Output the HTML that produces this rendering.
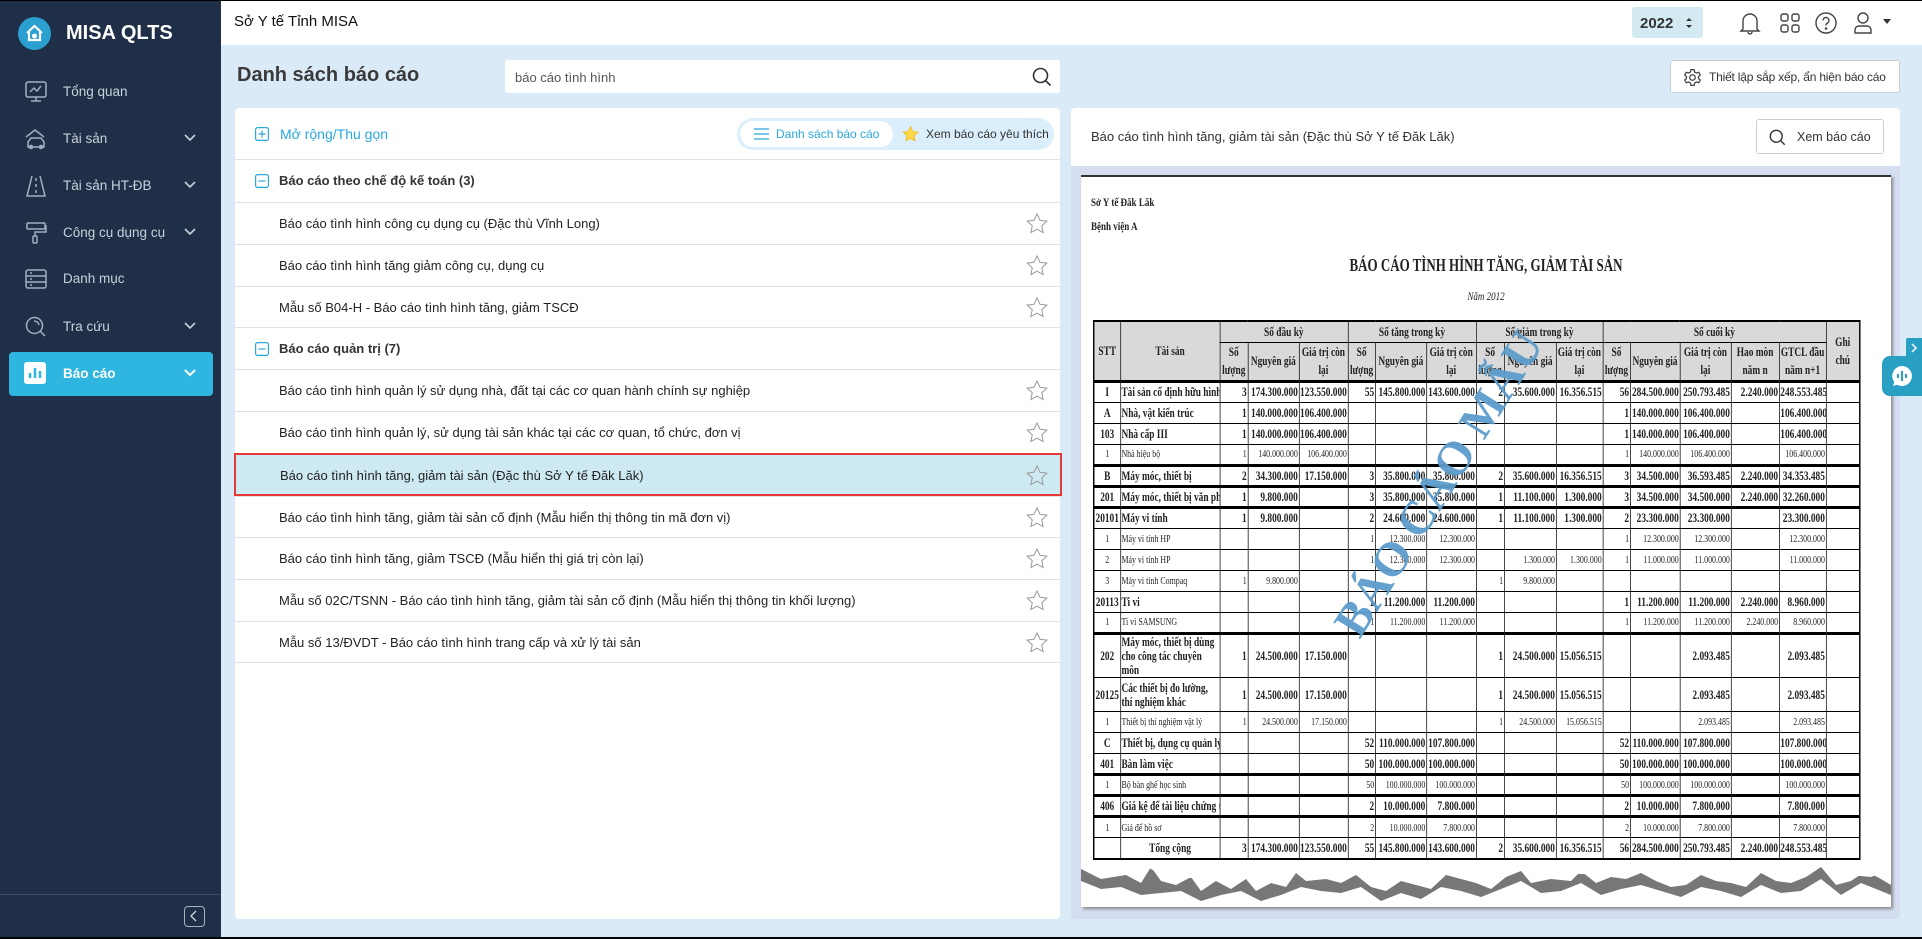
<!DOCTYPE html>
<html><head><meta charset="utf-8">
<style>
*{box-sizing:border-box;margin:0;padding:0}
body{width:1922px;height:939px;overflow:hidden;font-family:"Liberation Sans",sans-serif;background:#dbeaf7;position:relative;color:#222}
.sb{position:absolute;left:0;top:0;width:221px;height:939px;background:#1e2f47}
.logo{position:absolute;left:18px;top:17px;width:33px;height:33px;border-radius:50%;background:#2a9fd0}
.brand{position:absolute;left:66px;top:22px;color:#fff;font-weight:bold;font-size:20px}
.mi{position:absolute;left:0;width:221px;height:44px;color:#c9d1db;font-size:13.5px}
.mi span{position:absolute;left:63px;top:14px}
.mi svg.ic{position:absolute;left:24px;top:10px}
.mi svg.ch{position:absolute;left:184px;top:17px}
.act{left:9px;width:204px;background:#2eb6e0;border-radius:4px;color:#fff;font-weight:bold}
.hdr{position:absolute;left:221px;top:0;width:1701px;height:45px;background:#fff}
.panel{position:absolute;background:#fff;border-radius:4px}
.row{position:absolute;left:0;width:825px;height:42px;border-top:1px solid #e2e2e2;font-size:13px}
.row span{position:absolute;left:44px;top:13px}
.star{position:absolute;right:12px;top:10px}
table{border-collapse:collapse;font-family:"Liberation Serif",serif;table-layout:fixed}
td{border:1px solid #000;height:21px;font-size:11px;text-align:right;padding:0 1px;white-space:nowrap;overflow:hidden}
tr.b td{font-weight:bold;font-size:13px}
tr.t td{border-top:3px solid #000}
td.c{text-align:center}td.l{text-align:left}
tr.h td{text-align:center;font-weight:bold;font-size:13px;background:#d9d9d9;line-height:1.35;white-space:normal}
tr.tall td{height:34px}
tr.tall td.l{white-space:normal;line-height:1.1}
</style></head><body>
<div style="position:absolute;left:0;top:0;width:1922px;height:1px;background:#000;z-index:9"></div>
<div style="position:absolute;left:0;top:937px;width:1922px;height:2px;background:#000;z-index:9"></div>
<div class="sb">
 <div class="logo"><svg width="33" height="33" viewBox="0 0 33 33"><path d="M9 16 L16.5 9 L24 16 M11 15 V23 H22 V15" fill="none" stroke="#fff" stroke-width="2.2"/><circle cx="16.5" cy="19" r="2.5" fill="#fff"/></svg></div>
 <div class="brand">MISA QLTS</div>
 <div class="mi" style="top:70px"><svg class="ic" width="24" height="24" viewBox="0 0 24 24" fill="none" stroke="#9fb0c2" stroke-width="1.5"><rect x="2" y="2" width="20" height="15" rx="2"/><path d="M6 12l4-4 3 3 4-5M12 17v4M7 21h10"/></svg><span>Tổng quan</span></div>
 <div class="mi" style="top:117px"><svg class="ic" width="24" height="24" viewBox="0 0 24 24" fill="none" stroke="#9fb0c2" stroke-width="1.5"><path d="M2 10L11 3l9 7M4 15l3-4h10l3 4v5H4z"/><circle cx="7" cy="20" r="1.5"/><circle cx="17" cy="20" r="1.5"/></svg><span>Tài sản</span><svg class="ch" width="12" height="8" viewBox="0 0 12 8"><path d="M1 1l5 5 5-5" fill="none" stroke="#c9d1db" stroke-width="1.6"/></svg></div>
 <div class="mi" style="top:164px"><svg class="ic" width="24" height="24" viewBox="0 0 24 24" fill="none" stroke="#9fb0c2" stroke-width="1.5"><path d="M8 2L3 22h18L16 2M12 4v3M12 10v3M12 16v3"/></svg><span>Tài sản HT-ĐB</span><svg class="ch" width="12" height="8" viewBox="0 0 12 8"><path d="M1 1l5 5 5-5" fill="none" stroke="#c9d1db" stroke-width="1.6"/></svg></div>
 <div class="mi" style="top:211px"><svg class="ic" width="24" height="24" viewBox="0 0 24 24" fill="none" stroke="#9fb0c2" stroke-width="1.5"><rect x="3" y="2" width="18" height="6" rx="1"/><path d="M21 5h1v6H11v4"/><rect x="9" y="15" width="4" height="7" rx="1"/></svg><span>Công cụ dụng cụ</span><svg class="ch" width="12" height="8" viewBox="0 0 12 8"><path d="M1 1l5 5 5-5" fill="none" stroke="#c9d1db" stroke-width="1.6"/></svg></div>
 <div class="mi" style="top:257px"><svg class="ic" width="24" height="24" viewBox="0 0 24 24" fill="none" stroke="#9fb0c2" stroke-width="1.5"><rect x="2" y="3" width="20" height="18" rx="2"/><path d="M2 9h20M2 15h20M6 6h2M6 12h2M6 18h2"/></svg><span>Danh mục</span></div>
 <div class="mi" style="top:305px"><svg class="ic" width="24" height="24" viewBox="0 0 24 24" fill="none" stroke="#9fb0c2" stroke-width="1.5"><circle cx="10.5" cy="10.5" r="8"/><path d="M16 16l5 5M10 6a5 5 0 0 1 5 4"/></svg><span>Tra cứu</span><svg class="ch" width="12" height="8" viewBox="0 0 12 8"><path d="M1 1l5 5 5-5" fill="none" stroke="#c9d1db" stroke-width="1.6"/></svg></div>
 <div class="mi act" style="top:352px"><svg class="ic" style="left:15px" width="22" height="22" viewBox="0 0 22 22"><rect x="0" y="0" width="22" height="22" rx="3" fill="#fff"/><path d="M6 16V11M11 16V6M16 16V9" stroke="#2eb6e0" stroke-width="2.5"/></svg><span style="left:54px">Báo cáo</span><svg class="ch" style="left:175px" width="12" height="8" viewBox="0 0 12 8"><path d="M1 1l5 5 5-5" fill="none" stroke="#fff" stroke-width="2"/></svg></div>
 <div style="position:absolute;left:0;top:894px;width:221px;height:1px;background:#3a4b62"></div>
 <div style="position:absolute;left:184px;top:906px;width:21px;height:21px;border:1.5px solid #a9b3bf;border-radius:4px"><svg width="18" height="18" viewBox="0 0 18 18"><path d="M11 4l-5 5 5 5" fill="none" stroke="#cfd6de" stroke-width="1.3"/></svg></div>
</div>
<div class="hdr">
 <div style="position:absolute;left:13px;top:13px;font-size:15px;color:#111">Sở Y tế Tỉnh MISA</div>
 <div style="position:absolute;left:1411px;top:7px;width:71px;height:31px;background:#d4eaf3;border-radius:3px;font-size:15px;font-weight:bold;color:#333;padding:8px 0 0 8px">2022<svg style="position:absolute;left:52px;top:9px" width="10" height="14" viewBox="0 0 10 14"><path d="M2 5l3-3 3 3zM2 9l3 3 3-3z" fill="#333"/></svg></div>
 <svg style="position:absolute;left:1518px;top:11px" width="22" height="24" viewBox="0 0 22 24" fill="none" stroke="#444" stroke-width="1.4"><path d="M4 18V10a7 7 0 0 1 14 0v8l2 2H2zM9 21a2 2 0 0 0 4 0"/></svg>
 <svg style="position:absolute;left:1559px;top:13px" width="20" height="20" viewBox="0 0 20 20" fill="none" stroke="#444" stroke-width="1.4"><rect x="1" y="1" width="7" height="7" rx="2"/><rect x="12" y="1" width="7" height="7" rx="2"/><rect x="1" y="12" width="7" height="7" rx="2"/><rect x="12" y="12" width="7" height="7" rx="2"/></svg>
 <svg style="position:absolute;left:1594px;top:12px" width="22" height="22" viewBox="0 0 22 22" fill="none" stroke="#444" stroke-width="1.4"><circle cx="11" cy="11" r="10"/><path d="M8 8.5a3 3 0 1 1 4 2.8c-1 .4-1 1-1 2.2"/><circle cx="11" cy="16.5" r=".6" fill="#444"/></svg>
 <svg style="position:absolute;left:1632px;top:11px" width="20" height="24" viewBox="0 0 20 24" fill="none" stroke="#444" stroke-width="1.4"><circle cx="10" cy="7" r="5"/><path d="M2 22v-3a4 4 0 0 1 4-4h8a4 4 0 0 1 4 4v3z"/></svg>
 <svg style="position:absolute;left:1662px;top:19px" width="8" height="6"><path d="M0 0h8L4 5z" fill="#333"/></svg>
</div>
<div style="position:absolute;left:237px;top:64px;font-size:20px;font-weight:bold;color:#3a3a3a">Danh sách báo cáo</div>
<div style="position:absolute;left:505px;top:60px;width:555px;height:33px;background:#fff;border-radius:3px;font-size:13px;color:#555;padding:10px 0 0 10px">báo cáo tình hình<svg style="position:absolute;right:8px;top:7px" width="20" height="20" viewBox="0 0 20 20" fill="none" stroke="#333" stroke-width="1.6"><circle cx="8.5" cy="8.5" r="7"/><path d="M13.5 13.5l5 5"/></svg></div>
<div style="position:absolute;left:1670px;top:60px;width:230px;height:33px;background:#fff;border:1px solid #c9ced6;border-radius:3px;font-size:12px;color:#333;padding:9px 0 0 38px;white-space:nowrap;letter-spacing:-0.2px">Thiết lập sắp xếp, ẩn hiện báo cáo<svg style="position:absolute;left:12px;top:7px" width="19" height="19" viewBox="0 0 24 24" fill="none" stroke="#444" stroke-width="1.6"><circle cx="12" cy="12" r="3.5"/><path d="M10 2h4l.6 3 2.4 1.4 2.9-1 2 3.4-2.3 2v2.4l2.3 2-2 3.4-2.9-1L14.6 19l-.6 3h-4l-.6-3L7 17.6l-2.9 1-2-3.4 2.3-2v-2.4l-2.3-2 2-3.4 2.9 1L9.4 5z"/></svg></div>

<div class="panel" style="left:235px;top:108px;width:825px;height:811px">
 <svg style="position:absolute;left:20px;top:19px" width="14" height="14" viewBox="0 0 14 14" fill="none" stroke="#29a8e0" stroke-width="1.2"><rect x=".6" y=".6" width="12.8" height="12.8" rx="2"/><path d="M7 3.5v7M3.5 7h7"/></svg>
 <div style="position:absolute;left:45px;top:18px;font-size:14px;color:#29a8e0">Mở rộng/Thu gọn</div>
 <div style="position:absolute;left:502px;top:10px;width:317px;height:32px;border-radius:16px;background:#dbeefb">
  <div style="position:absolute;left:3px;top:3px;width:153px;height:26px;border-radius:13px;background:#fff;font-size:12px;color:#29a8e0;padding:6px 0 0 36px">Danh sách báo cáo<svg style="position:absolute;left:14px;top:7px" width="15" height="12" viewBox="0 0 15 12"><path d="M0 1h15M0 6h15M0 11h15" stroke="#29a8e0" stroke-width="1.3"/></svg></div>
  <svg style="position:absolute;left:165px;top:8px" width="17" height="16" viewBox="0 0 24 23"><path d="M12 1l3.3 7 7.5.9-5.6 5.1 1.5 7.4L12 17.7 5.3 21.4l1.5-7.4L1.2 8.9l7.5-.9z" fill="#ffd84a" stroke="#f0b400" stroke-width="1"/></svg>
  <div style="position:absolute;left:189px;top:9px;font-size:12px;color:#333">Xem báo cáo yêu thích</div>
 </div>
 <div class="row" style="top:51px"><svg style="position:absolute;left:20px;top:14px" width="14" height="14" viewBox="0 0 14 14" fill="none" stroke="#29a8e0" stroke-width="1.2"><rect x=".6" y=".6" width="12.8" height="12.8" rx="2"/><path d="M3.5 7h7"/></svg><span style="font-weight:bold;color:#333">Báo cáo theo chế độ kế toán (3)</span></div>
 <div class="row" style="top:94px"><span>Báo cáo tình hình công cụ dụng cụ (Đặc thù Vĩnh Long)</span><svg class="star" width="22" height="21" viewBox="0 0 24 23"><path d="M12 1l3.3 7 7.5.9-5.6 5.1 1.5 7.4L12 17.7 5.3 21.4l1.5-7.4L1.2 8.9l7.5-.9z" fill="none" stroke="#999" stroke-width="1.1"/></svg></div>
 <div class="row" style="top:136px"><span>Báo cáo tình hình tăng giảm công cụ, dụng cụ</span><svg class="star" width="22" height="21" viewBox="0 0 24 23"><path d="M12 1l3.3 7 7.5.9-5.6 5.1 1.5 7.4L12 17.7 5.3 21.4l1.5-7.4L1.2 8.9l7.5-.9z" fill="none" stroke="#999" stroke-width="1.1"/></svg></div>
 <div class="row" style="top:178px"><span>Mẫu số B04-H - Báo cáo tình hình tăng, giảm TSCĐ</span><svg class="star" width="22" height="21" viewBox="0 0 24 23"><path d="M12 1l3.3 7 7.5.9-5.6 5.1 1.5 7.4L12 17.7 5.3 21.4l1.5-7.4L1.2 8.9l7.5-.9z" fill="none" stroke="#999" stroke-width="1.1"/></svg></div>
 <div class="row" style="top:219px"><svg style="position:absolute;left:20px;top:14px" width="14" height="14" viewBox="0 0 14 14" fill="none" stroke="#29a8e0" stroke-width="1.2"><rect x=".6" y=".6" width="12.8" height="12.8" rx="2"/><path d="M3.5 7h7"/></svg><span style="font-weight:bold;color:#333">Báo cáo quản trị (7)</span></div>
 <div class="row" style="top:261px"><span>Báo cáo tình hình quản lý sử dụng nhà, đất tại các cơ quan hành chính sự nghiệp</span><svg class="star" width="22" height="21" viewBox="0 0 24 23"><path d="M12 1l3.3 7 7.5.9-5.6 5.1 1.5 7.4L12 17.7 5.3 21.4l1.5-7.4L1.2 8.9l7.5-.9z" fill="none" stroke="#999" stroke-width="1.1"/></svg></div>
 <div class="row" style="top:303px"><span>Báo cáo tình hình quản lý, sử dụng tài sản khác tại các cơ quan, tổ chức, đơn vị</span><svg class="star" width="22" height="21" viewBox="0 0 24 23"><path d="M12 1l3.3 7 7.5.9-5.6 5.1 1.5 7.4L12 17.7 5.3 21.4l1.5-7.4L1.2 8.9l7.5-.9z" fill="none" stroke="#999" stroke-width="1.1"/></svg></div>
 <div class="row" style="top:345px;left:-1px;width:828px;height:43px;background:#cdeaf2;border:2px solid #e53935"><span>Báo cáo tình hình tăng, giảm tài sản (Đặc thù Sở Y tế Đăk Lăk)</span><svg class="star" width="22" height="21" viewBox="0 0 24 23"><path d="M12 1l3.3 7 7.5.9-5.6 5.1 1.5 7.4L12 17.7 5.3 21.4l1.5-7.4L1.2 8.9l7.5-.9z" fill="none" stroke="#999" stroke-width="1.1"/></svg></div>
 <div class="row" style="top:388px"><span>Báo cáo tình hình tăng, giảm tài sản cố định (Mẫu hiển thị thông tin mã đơn vị)</span><svg class="star" width="22" height="21" viewBox="0 0 24 23"><path d="M12 1l3.3 7 7.5.9-5.6 5.1 1.5 7.4L12 17.7 5.3 21.4l1.5-7.4L1.2 8.9l7.5-.9z" fill="none" stroke="#999" stroke-width="1.1"/></svg></div>
 <div class="row" style="top:429px"><span>Báo cáo tình hình tăng, giảm TSCĐ (Mẫu hiển thị giá trị còn lại)</span><svg class="star" width="22" height="21" viewBox="0 0 24 23"><path d="M12 1l3.3 7 7.5.9-5.6 5.1 1.5 7.4L12 17.7 5.3 21.4l1.5-7.4L1.2 8.9l7.5-.9z" fill="none" stroke="#999" stroke-width="1.1"/></svg></div>
 <div class="row" style="top:471px"><span>Mẫu số 02C/TSNN - Báo cáo tình hình tăng, giảm tài sản cố định (Mẫu hiển thị thông tin khối lượng)</span><svg class="star" width="22" height="21" viewBox="0 0 24 23"><path d="M12 1l3.3 7 7.5.9-5.6 5.1 1.5 7.4L12 17.7 5.3 21.4l1.5-7.4L1.2 8.9l7.5-.9z" fill="none" stroke="#999" stroke-width="1.1"/></svg></div>
 <div class="row" style="top:513px;border-bottom:1px solid #e2e2e2"><span>Mẫu số 13/ĐVDT - Báo cáo tình hình trang cấp và xử lý tài sản</span><svg class="star" width="22" height="21" viewBox="0 0 24 23"><path d="M12 1l3.3 7 7.5.9-5.6 5.1 1.5 7.4L12 17.7 5.3 21.4l1.5-7.4L1.2 8.9l7.5-.9z" fill="none" stroke="#999" stroke-width="1.1"/></svg></div>
</div>

<div style="position:absolute;left:1071px;top:108px;width:829px;height:811px;background:#d4def0;border-radius:4px;overflow:hidden">
 <div style="position:absolute;left:0;top:0;width:829px;height:58px;background:#fff">
  <div style="position:absolute;left:20px;top:21px;font-size:13px;color:#333">Báo cáo tình hình tăng, giảm tài sản (Đặc thù Sở Y tế Đăk Lăk)</div>
  <div style="position:absolute;left:685px;top:11px;width:128px;height:35px;border:1px solid #c9ced6;border-radius:3px;font-size:12.5px;color:#333;padding:10px 0 0 40px">Xem báo cáo<svg style="position:absolute;left:12px;top:9px" width="17" height="17" viewBox="0 0 20 20" fill="none" stroke="#333" stroke-width="1.6"><circle cx="8.5" cy="8.5" r="7"/><path d="M13.5 13.5l5 5"/></svg></div>
 </div>
 <div style="position:absolute;left:10px;top:67px;width:810px;height:732px;background:#fff;border-top:2px solid #333;box-shadow:2px 2px 3px #888;overflow:hidden">
  <div style="position:absolute;left:10px;top:18px;font-family:'Liberation Serif',serif;font-weight:bold;font-size:12px;transform:scaleX(.75);transform-origin:left">Sở Y tế Đăk Lăk</div>
  <div style="position:absolute;left:10px;top:42px;font-family:'Liberation Serif',serif;font-weight:bold;font-size:12px;transform:scaleX(.75);transform-origin:left">Bệnh viện A</div>
  <div style="position:absolute;left:0;width:810px;top:78px;text-align:center;font-family:'Liberation Serif',serif;font-weight:bold;font-size:18px;transform:scaleX(.72)">BÁO CÁO TÌNH HÌNH TĂNG, GIẢM TÀI SẢN</div>
  <div style="position:absolute;left:0;width:810px;top:112px;text-align:center;font-family:'Liberation Serif',serif;font-style:italic;font-size:12px;transform:scaleX(.75)">Năm 2012</div>
  <div style="position:absolute;left:12px;top:143px;transform:scaleX(.72);transform-origin:left top">
  <table style="width:1065px;border:2px solid #000">
  <colgroup><col style="width:37px"><col style="width:138px"><col style="width:39px"><col style="width:71px"><col style="width:68px"><col style="width:38px"><col style="width:71px"><col style="width:69px"><col style="width:39px"><col style="width:72px"><col style="width:65px"><col style="width:38px"><col style="width:69px"><col style="width:71px"><col style="width:67px"><col style="width:65px"><col style="width:47px"></colgroup>
  <tr class="h"><td rowspan="2">STT</td><td rowspan="2">Tài sản</td><td colspan="3">Số đầu kỳ</td><td colspan="3">Số tăng trong kỳ</td><td colspan="3">Số giảm trong kỳ</td><td colspan="5">Số cuối kỳ</td><td rowspan="2">Ghi chú</td></tr>
  <tr class="h" style="height:39px"><td>Số lượng</td><td>Nguyên giá</td><td>Giá trị còn lại</td><td>Số lượng</td><td>Nguyên giá</td><td>Giá trị còn lại</td><td>Số lượng</td><td>Nguyên giá</td><td>Giá trị còn lại</td><td>Số lượng</td><td>Nguyên giá</td><td>Giá trị còn lại</td><td>Hao mòn năm n</td><td>GTCL đầu năm n+1</td></tr>
  <tr class="b t"><td class="c">I</td><td class="l">Tài sản cố định hữu hình</td><td>3</td><td>174.300.000</td><td>123.550.000</td><td>55</td><td>145.800.000</td><td>143.600.000</td><td>2</td><td>35.600.000</td><td>16.356.515</td><td>56</td><td>284.500.000</td><td>250.793.485</td><td>2.240.000</td><td>248.553.485</td><td></td></tr>
  <tr class="b"><td class="c">A</td><td class="l">Nhà, vật kiến trúc</td><td>1</td><td>140.000.000</td><td>106.400.000</td><td></td><td></td><td></td><td></td><td></td><td></td><td>1</td><td>140.000.000</td><td>106.400.000</td><td></td><td>106.400.000</td><td></td></tr>
  <tr class="b"><td class="c">103</td><td class="l">Nhà cấp III</td><td>1</td><td>140.000.000</td><td>106.400.000</td><td></td><td></td><td></td><td></td><td></td><td></td><td>1</td><td>140.000.000</td><td>106.400.000</td><td></td><td>106.400.000</td><td></td></tr>
  <tr><td class="c">1</td><td class="l">Nhà hiệu bộ</td><td>1</td><td>140.000.000</td><td>106.400.000</td><td></td><td></td><td></td><td></td><td></td><td></td><td>1</td><td>140.000.000</td><td>106.400.000</td><td></td><td>106.400.000</td><td></td></tr>
  <tr class="b t"><td class="c">B</td><td class="l">Máy móc, thiết bị</td><td>2</td><td>34.300.000</td><td>17.150.000</td><td>3</td><td>35.800.000</td><td>35.800.000</td><td>2</td><td>35.600.000</td><td>16.356.515</td><td>3</td><td>34.500.000</td><td>36.593.485</td><td>2.240.000</td><td>34.353.485</td><td></td></tr>
  <tr class="b t"><td class="c">201</td><td class="l">Máy móc, thiết bị văn phòng</td><td>1</td><td>9.800.000</td><td></td><td>3</td><td>35.800.000</td><td>35.800.000</td><td>1</td><td>11.100.000</td><td>1.300.000</td><td>3</td><td>34.500.000</td><td>34.500.000</td><td>2.240.000</td><td>32.260.000</td><td></td></tr>
  <tr class="b t"><td class="c">20101</td><td class="l">Máy vi tính</td><td>1</td><td>9.800.000</td><td></td><td>2</td><td>24.600.000</td><td>24.600.000</td><td>1</td><td>11.100.000</td><td>1.300.000</td><td>2</td><td>23.300.000</td><td>23.300.000</td><td></td><td>23.300.000</td><td></td></tr>
  <tr><td class="c">1</td><td class="l">Máy vi tính HP</td><td></td><td></td><td></td><td>1</td><td>12.300.000</td><td>12.300.000</td><td></td><td></td><td></td><td>1</td><td>12.300.000</td><td>12.300.000</td><td></td><td>12.300.000</td><td></td></tr>
  <tr><td class="c">2</td><td class="l">Máy vi tính HP</td><td></td><td></td><td></td><td>1</td><td>12.300.000</td><td>12.300.000</td><td></td><td>1.300.000</td><td>1.300.000</td><td>1</td><td>11.000.000</td><td>11.000.000</td><td></td><td>11.000.000</td><td></td></tr>
  <tr><td class="c">3</td><td class="l">Máy vi tính Compaq</td><td>1</td><td>9.800.000</td><td></td><td></td><td></td><td></td><td>1</td><td>9.800.000</td><td></td><td></td><td></td><td></td><td></td><td></td><td></td></tr>
  <tr class="b"><td class="c">20113</td><td class="l">Ti vi</td><td></td><td></td><td></td><td>1</td><td>11.200.000</td><td>11.200.000</td><td></td><td></td><td></td><td>1</td><td>11.200.000</td><td>11.200.000</td><td>2.240.000</td><td>8.960.000</td><td></td></tr>
  <tr><td class="c">1</td><td class="l">Ti vi SAMSUNG</td><td></td><td></td><td></td><td>1</td><td>11.200.000</td><td>11.200.000</td><td></td><td></td><td></td><td>1</td><td>11.200.000</td><td>11.200.000</td><td>2.240.000</td><td>8.960.000</td><td></td></tr>
  <tr class="b t tall"><td class="c">202</td><td class="l">Máy móc, thiết bị dùng cho công tác chuyên môn</td><td>1</td><td>24.500.000</td><td>17.150.000</td><td></td><td></td><td></td><td>1</td><td>24.500.000</td><td>15.056.515</td><td></td><td></td><td>2.093.485</td><td></td><td>2.093.485</td><td></td></tr>
  <tr class="b tall"><td class="c">20125</td><td class="l">Các thiết bị đo lường, thí nghiệm khác</td><td>1</td><td>24.500.000</td><td>17.150.000</td><td></td><td></td><td></td><td>1</td><td>24.500.000</td><td>15.056.515</td><td></td><td></td><td>2.093.485</td><td></td><td>2.093.485</td><td></td></tr>
  <tr><td class="c">1</td><td class="l">Thiết bị thí nghiệm vật lý</td><td>1</td><td>24.500.000</td><td>17.150.000</td><td></td><td></td><td></td><td>1</td><td>24.500.000</td><td>15.056.515</td><td></td><td></td><td>2.093.485</td><td></td><td>2.093.485</td><td></td></tr>
  <tr class="b"><td class="c">C</td><td class="l">Thiết bị, dụng cụ quản lý</td><td></td><td></td><td></td><td>52</td><td>110.000.000</td><td>107.800.000</td><td></td><td></td><td></td><td>52</td><td>110.000.000</td><td>107.800.000</td><td></td><td>107.800.000</td><td></td></tr>
  <tr class="b"><td class="c">401</td><td class="l">Bàn làm việc</td><td></td><td></td><td></td><td>50</td><td>100.000.000</td><td>100.000.000</td><td></td><td></td><td></td><td>50</td><td>100.000.000</td><td>100.000.000</td><td></td><td>100.000.000</td><td></td></tr>
  <tr class="t"><td class="c">1</td><td class="l">Bộ bàn ghế học sinh</td><td></td><td></td><td></td><td>50</td><td>100.000.000</td><td>100.000.000</td><td></td><td></td><td></td><td>50</td><td>100.000.000</td><td>100.000.000</td><td></td><td>100.000.000</td><td></td></tr>
  <tr class="b t"><td class="c">406</td><td class="l">Giá kệ để tài liệu chứng từ</td><td></td><td></td><td></td><td>2</td><td>10.000.000</td><td>7.800.000</td><td></td><td></td><td></td><td>2</td><td>10.000.000</td><td>7.800.000</td><td></td><td>7.800.000</td><td></td></tr>
  <tr class="t"><td class="c">1</td><td class="l">Giá để hồ sơ</td><td></td><td></td><td></td><td>2</td><td>10.000.000</td><td>7.800.000</td><td></td><td></td><td></td><td>2</td><td>10.000.000</td><td>7.800.000</td><td></td><td>7.800.000</td><td></td></tr>
  <tr class="b"><td class="c"></td><td class="c">Tổng cộng</td><td>3</td><td>174.300.000</td><td>123.550.000</td><td>55</td><td>145.800.000</td><td>143.600.000</td><td>2</td><td>35.600.000</td><td>16.356.515</td><td>56</td><td>284.500.000</td><td>250.793.485</td><td>2.240.000</td><td>248.553.485</td><td></td></tr>
  </table></div>
  <div style="position:absolute;left:195px;top:300px;font-family:'Liberation Serif',serif;font-weight:bold;font-size:48px;color:#5d9dcc;transform:rotate(-58deg);transform-origin:center;white-space:nowrap;width:300px;text-align:center;opacity:.95">BÁO CÁO MẪU</div>
  <svg style="position:absolute;left:0;top:684px" width="810" height="48" viewBox="0 0 810 48"><path d="M0 8 L20 18 L45 14 L60 22 L70 6 L80 20 L95 24 L110 16 L120 30 L135 20 L150 28 L165 18 L175 30 L190 22 L205 26 L215 12 L225 20 L245 18 L260 22 L275 14 L290 26 L305 30 L320 20 L335 24 L350 28 L365 14 L380 18 L395 22 L410 28 L425 16 L440 10 L450 22 L470 18 L490 20 L500 10 L515 22 L530 16 L545 18 L560 12 L575 20 L590 26 L605 24 L620 14 L635 20 L650 22 L665 26 L680 12 L695 20 L710 22 L725 16 L740 6 L755 24 L770 20 L785 10 L800 18 L810 24 L810 34 L795 28 L780 22 L760 34 L740 18 L720 30 L700 32 L680 24 L660 36 L640 30 L620 26 L600 36 L580 30 L560 24 L540 28 L520 34 L500 22 L480 30 L460 32 L440 20 L420 28 L400 36 L380 30 L360 26 L340 38 L320 32 L300 40 L280 26 L260 32 L240 30 L220 26 L200 34 L180 40 L160 30 L140 34 L120 40 L100 30 L80 32 L60 34 L40 26 L20 28 L0 20 Z" fill="#777"/><path d="M0 0 H810 V8 L790 16 L770 14 L740 2 L720 14 L680 6 L640 14 L600 12 L560 6 L520 14 L480 12 L440 4 L400 16 L360 8 L320 14 L280 10 L240 12 L200 8 L160 14 L120 18 L80 14 L60 2 L40 10 L0 4 Z" fill="#fff"/></svg>
 </div>
</div>
<div style="position:absolute;left:1906px;top:338px;width:16px;height:20px;background:#2a9fc4;border-radius:2px 0 0 2px"><svg width="16" height="20"><path d="M6 6l4 4-4 4" fill="none" stroke="#fff" stroke-width="1.5"/></svg></div>
<div style="position:absolute;left:1882px;top:356px;width:40px;height:40px;background:#2a9fc4;border-radius:8px 0 0 8px"><svg style="position:absolute;left:8px;top:8px" width="24" height="24" viewBox="0 0 24 24"><path d="M12 2a10 10 0 1 1-5 18.7L3 22l1.3-4A10 10 0 0 1 12 2z" fill="#fff"/><path d="M8 10v4M12 7v10M16 10v4" stroke="#2a9fc4" stroke-width="2"/></svg></div>
</body></html>
